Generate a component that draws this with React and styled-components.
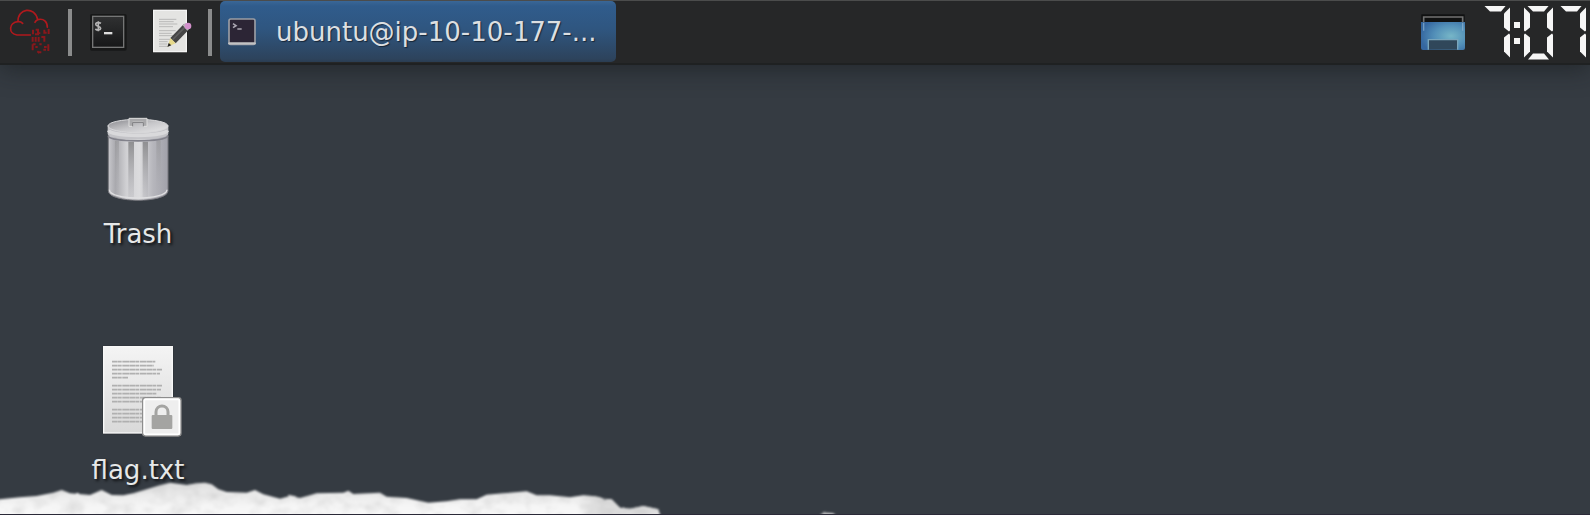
import React from "react";
import styled, { createGlobalStyle } from "styled-components";

const GlobalStyle = createGlobalStyle`
  body {
    margin: 0;
    background: #353b42;
    font-family: "DejaVu Sans", sans-serif;
  }
`;

const Desktop = styled.div`
  position: relative;
  box-sizing: border-box;
  min-height: 100vh;
  overflow: hidden;
  background: #353b42;
  border-bottom: 1px solid #2b2a38;
`;

const Panel = styled.header`
  display: flex;
  align-items: center;
  height: 65px;
  background: #262728;
  box-shadow: inset 0 1px #4b4c4c, inset 0 -2px #1f2122,
    0 4px 24px rgba(20, 24, 26, 0.55);
`;

const PanelButton = styled.button`
  display: flex;
  align-items: center;
  justify-content: center;
  width: 64px;
  height: 64px;
  padding: 0;
  border: 0;
  background: none;
`;

const Separator = styled.span`
  width: 4px;
  height: 47px;
  margin: 0 4px;
  background: #8b8c8c;
`;

const TaskButton = styled.button`
  display: flex;
  align-items: center;
  gap: 18px;
  width: 396px;
  height: 61px;
  margin: 0 auto 2px 4px;
  padding: 1px 6px 0;
  border: 0;
  border-radius: 5px;
  background: linear-gradient(#3a6797, #305c8c 8%, #2f5680 45%, #2d435c 95%, #2b3d51);
  color: #dcdfe1;
  font: 26px/30px "DejaVu Sans", sans-serif;
  text-shadow: 1px 1px 1px rgba(0, 0, 0, 0.5);
  white-space: nowrap;
`;

const Clock = styled.time`
  display: flex;
  align-items: center;
  gap: 4px;
  margin: 0 4px 0 6px;
`;

const DigitFace = styled.span`
  display: grid;
  grid-template-columns: 7px 15px 7px;
  grid-template-rows: 6px 20px 4px 20px 4px;
  width: 29px;
  height: 54px;
`;

const segmentStyles = {
  top: ["1 / 1 / 2 / 4", "polygon(3px 0, 25px 0, 20px 6px, 9px 6px)"],
  upperLeft: ["1 / 1 / 3 / 2", "polygon(0 2px, 6px 8px, 6px 22px, 1px 26px, 0 25px)"],
  upperRight: ["1 / 3 / 3 / 4", "polygon(7px 2px, 1px 8px, 1px 22px, 6px 26px, 7px 25px)"],
  lowerLeft: ["3 / 1 / 6 / 2", "polygon(0 3px, 1px 2px, 6px 6px, 6px 20px, 0 26px)"],
  lowerRight: ["3 / 3 / 6 / 4", "polygon(7px 3px, 6px 2px, 1px 6px, 1px 20px, 7px 26px)"],
  bottom: ["4 / 1 / 6 / 4", "polygon(9px 18px, 20px 18px, 25px 24px, 4px 24px)"],
};

const Segment = styled.i`
  grid-area: ${({ $side }) => segmentStyles[$side][0]};
  clip-path: ${({ $side }) => segmentStyles[$side][1]};
  background: #f6f6f6;
`;

const Colon = styled.span`
  display: flex;
  flex-direction: column;
  gap: 10px;
`;

const ColonDot = styled.i`
  width: 6px;
  height: 6px;
  background: #f6f6f6;
`;

const Icons = styled.main`
  display: flex;
  flex-direction: column;
  align-items: flex-start;
  gap: 94px;
  padding: 42px 38px 24px;
`;

const DesktopIcon = styled.button`
  display: flex;
  flex-direction: column;
  align-items: center;
  gap: 16px;
  width: 200px;
  padding: 0;
  border: 0;
  background: none;
  color: #e6e8e8;
  font: 26px/30px "DejaVu Sans", sans-serif;
  text-shadow: 2px 2px 3px rgba(0, 0, 0, 0.75);
`;

const TornEdge = styled.svg`
  position: absolute;
  left: 0;
  bottom: -1px;
  display: block;
  pointer-events: none;
`;

const LIT = {
  0: ["top", "upperLeft", "upperRight", "lowerLeft", "lowerRight", "bottom"],
  7: ["top", "upperRight", "lowerRight"],
};

function Digit({ value }) {
  return (
    <DigitFace>
      {LIT[value].map((side) => (
        <Segment key={side} $side={side} />
      ))}
    </DigitFace>
  );
}

function CloudIcon() {
  return (
    <svg width="48" height="48" viewBox="24 24 144 144" fill="none" stroke="#b0191d">
      <path
        strokeWidth="5"
        strokeLinecap="round"
        d="M91 102H51C24 98 26 64 54 62C52 22 104 14 113 56C132 51 142 63 142 79M54 62C61 61 65 64 68 67M113 56C108 58 106 61 105 64"
      />
      <g strokeWidth="6" stroke="#8a171b">
        <path d="M99 86v14M107 86h7v14h-9M118 99v-5M133 86v9h7M146 84v15" />
        <path d="M98 108v14M107 108v14M116 108v14M124 108h9v14" />
        <path d="M98 130h9M98 130v18M106 138h7M118 130h7M132 138h8M145 130v20M138 146h-8" />
        <path d="M112 151l6 5M124 154h-8" />
      </g>
    </svg>
  );
}

function TerminalIcon() {
  return (
    <svg width="48" height="48" viewBox="252 24 144 144">
      <defs>
        <linearGradient id="termFace" x2="0" y2="1">
          <stop stopColor="#303132" />
          <stop offset="1" stopColor="#161718" />
        </linearGradient>
      </defs>
      <rect x="270" y="39" width="110" height="110" rx="5" fill="#171818" />
      <rect x="278" y="46" width="93" height="93" fill="url(#termFace)" stroke="#757676" strokeWidth="4" />
      <path
        d="M303 67C293 62 285 66 288 72C291 76 302 76 302 82C302 88 292 89 286 84M295 61V91"
        fill="none" stroke="#b4b4b4" strokeWidth="5"
      />
      <rect x="312" y="93" width="25" height="7" fill="#dedede" />
    </svg>
  );
}

function EditorIcon() {
  return (
    <svg width="48" height="48" viewBox="444 24 144 144">
      <rect x="458" y="26" width="104" height="130" fill="#151616" />
      <rect x="461" y="28" width="98" height="124" fill="#e4e4e2" stroke="#f4f4f4" strokeWidth="4" />
      <path
        stroke="#b9b9b8" strokeWidth="3"
        d="M477 55h52M477 62h44M477 69h55M477 77h42M477 89h50M477 97h38M477 104h47M477 115h37M477 122h26M477 129h25M477 136h24"
      />
      <path d="M511 111L551 70L566 86L527 127Z" fill="#454545" />
      <path d="M517 117L557 76" stroke="#5d5d5d" strokeWidth="5" />
      <path d="M511 111L527 127L503 137Z" fill="#e6d98a" />
      <path d="M506 126L514 133L502 138Z" fill="#252525" />
      <path d="M548 73L556 66L571 80L562 89Z" fill="#b9b9b9" />
      <circle cx="564" cy="75" r="10" fill="#d391cb" />
    </svg>
  );
}

function TaskIcon() {
  return (
    <svg width="32" height="32" viewBox="78 45 96 96">
      <rect x="87" y="54" width="78" height="76" rx="5" fill="#2c2535" stroke="#9b9da4" strokeWidth="5" />
      <path d="M88 127H164" stroke="#c2c2c3" strokeWidth="7" strokeLinecap="round" />
      <path d="M99 68L108 74L99 80M112 84H125" fill="none" stroke="#aaa6b1" strokeWidth="5" />
    </svg>
  );
}

function ShowDesktopIcon() {
  return (
    <svg width="48" height="48" viewBox="84 24 144 144">
      <defs>
        <radialGradient id="deskGlow" cx="0.68" cy="0.5" r="0.7">
          <stop stopColor="#77b6c7" />
          <stop offset="0.55" stopColor="#528fb8" />
          <stop offset="1" stopColor="#3567a0" />
        </radialGradient>
      </defs>
      <rect x="91" y="40" width="130" height="26" fill="#101111" />
      <path d="M90 63H222V141Q222 147 216 147H96Q90 147 90 141Z" fill="url(#deskGlow)" />
      <path d="M98 64V48H215V64" fill="none" stroke="#717272" strokeWidth="5" />
      <path d="M98 66V89M215 66V89" stroke="#8bb2d0" strokeWidth="4" opacity="0.7" />
      <path d="M112 146V116H200V146" fill="#30475a" stroke="#7aa6bc" strokeWidth="4" />
    </svg>
  );
}

function TrashIcon() {
  return (
    <svg width="96" height="96" viewBox="30 21 288 288">
      <defs>
        <linearGradient id="canBody">
          <stop stopColor="#c8c8cc" />
          <stop offset="0.12" stopColor="#a9a9ae" />
          <stop offset="0.3" stopColor="#d0d0d3" />
          <stop offset="0.52" stopColor="#dcdcde" />
          <stop offset="0.75" stopColor="#b6b6bc" />
          <stop offset="1" stopColor="#a1a1aa" />
        </linearGradient>
        <linearGradient id="canLid" x2="1" y2="1">
          <stop stopColor="#88888d" />
          <stop offset="0.5" stopColor="#c6c6c9" />
          <stop offset="1" stopColor="#e8e8e9" />
        </linearGradient>
        <linearGradient id="canGroove" x2="0" y2="1">
          <stop stopColor="#8f8f91" />
          <stop offset="1" stopColor="#b1b1b6" stopOpacity="0.3" />
        </linearGradient>
      </defs>
      <path d="M85 105V273C87 310 262 310 264 273V105Z" fill="url(#canBody)" stroke="#77777d" strokeWidth="3" />
      <path d="M88 269C90 302 259 302 261 269" fill="none" stroke="#dfdfe1" strokeWidth="4" />
      <path d="M145 125h17v166h-17zM188 125h16v166h-16z" fill="url(#canGroove)" />
      <path d="M105 122h12v160h-12zM229 120h13v160h-13z" fill="url(#canGroove)" opacity="0.5" />
      <path d="M84 109C98 127 249 127 264 109" fill="none" stroke="#82828b" strokeWidth="5" />
      <path d="M83 76V102C88 124 260 124 265 102V76Z" fill="#c3c3c7" />
      <path d="M86 91C94 111 254 111 262 91" fill="none" stroke="#d9d9db" strokeWidth="11" />
      <ellipse cx="174" cy="78" rx="90" ry="20" fill="url(#canLid)" stroke="#d8d8da" strokeWidth="3" />
      <path d="M147 79V55H201V79H190V66H158V79Z" fill="#a9a9ab" stroke="#dedede" strokeWidth="3" />
      <path d="M158 79V67H190V79" fill="none" stroke="#78787b" strokeWidth="3" />
    </svg>
  );
}

const paragraphLines = [
  [95, 130], [107, 125], [119, 150], [131, 144], [143, 48],
  [167, 150], [179, 147], [191, 133], [203, 146], [215, 120],
  [239, 130], [251, 130], [263, 130], [275, 130],
];

function LockedTextIcon() {
  return (
    <svg width="96" height="96" viewBox="30 39 288 288">
      <defs>
        <linearGradient id="sheet" x2="0" y2="1">
          <stop stopColor="#f4f4f4" />
          <stop offset="1" stopColor="#d9d9d9" />
        </linearGradient>
      </defs>
      <rect x="68" y="47" width="212" height="266" rx="3" fill="#22272b" opacity="0.7" />
      <rect x="71" y="50" width="206" height="259" fill="url(#sheet)" stroke="#f8f8f8" strokeWidth="4" />
      <g stroke="#b0b0b0" strokeWidth="5" strokeDasharray="17 1 11 2 20 1">
        {paragraphLines.map(([y, length]) => (
          <path key={y} d={`M96 ${y}h${length}`} />
        ))}
      </g>
      <rect x="188" y="203" width="115" height="115" rx="8" fill="#f1f1f1" stroke="#8d8d8d" strokeWidth="4" />
      <rect x="193" y="208" width="105" height="105" rx="4" fill="#eeeeee" stroke="#ffffff" strokeWidth="5" />
      <path d="M228 257V246C228 222 264 222 264 246V257" fill="none" stroke="#a4a4a2" strokeWidth="9" />
      <rect x="215" y="255" width="62" height="42" rx="3" fill="#a4a4a2" />
    </svg>
  );
}

function TornPaper() {
  return (
    <TornEdge width="900" height="45" viewBox="0 0 2700 135" aria-hidden="true">
      <defs>
        <filter id="paper" x="-2%" y="-20%" width="104%" height="140%">
          <feTurbulence type="fractalNoise" baseFrequency="0.02 0.03" numOctaves="3" seed="4" result="noise" />
          <feColorMatrix
            in="noise"
            values="0 0 0 0 0.5  0 0 0 0 0.5  0 0 0 0 0.5  0.9 0 0 0 -0.37"
            result="fibres"
          />
          <feComposite in="fibres" in2="SourceGraphic" operator="in" result="grain" />
          <feMerge result="textured">
            <feMergeNode in="SourceGraphic" />
            <feMergeNode in="grain" />
          </feMerge>
          <feDisplacementMap in="textured" in2="noise" scale="6" />
          <feGaussianBlur stdDeviation="3" />
        </filter>
        <linearGradient id="paperShade" x2="0" y2="1">
          <stop stopColor="#dedede" />
          <stop offset="0.5" stopColor="#f4f4f4" />
          <stop offset="1" stopColor="#ffffff" />
        </linearGradient>
        <linearGradient id="paperEnd">
          <stop stopColor="#c9c9c9" stopOpacity="0" />
          <stop offset="0.3" stopColor="#cecece" stopOpacity="0.7" />
          <stop offset="1" stopColor="#dedede" stopOpacity="0.8" />
        </linearGradient>
      </defs>
      <g filter="url(#paper)">
        <path
          fill="url(#paperShade)"
          d="M-30 170V90L0 88L60 82L110 78L160 68L185 60L210 70L270 75L305 60L335 75L370 76L400 70L440 58L480 46L510 38L560 45L590 40L615 38L635 43L655 58L680 66L740 68L765 60L790 73L840 86L870 78L900 84L930 76L950 70L1030 68L1045 62L1060 72L1140 68L1160 80L1220 84L1285 98L1340 94L1380 88L1430 88L1460 74L1510 70L1580 64L1610 76L1650 76L1710 82L1750 76L1785 79L1800 82L1810 86L1835 88L1860 113L1890 116L1930 108L1975 118L1990 170Z"
        />
        <path
          fill="url(#paperEnd)"
          d="M1730 170V79L1785 79L1810 86L1835 88L1860 113L1890 116L1930 108L1975 118L1990 170Z"
        />
        <path fill="#dddddd" d="M2455 145L2464 132L2480 128L2500 130L2515 145Z" />
      </g>
    </TornEdge>
  );
}

export default function App() {
  return (
    <>
      <GlobalStyle />
      <Desktop>
        <Panel>
          <PanelButton aria-label="Applications menu"><CloudIcon /></PanelButton>
          <Separator />
          <PanelButton aria-label="Terminal"><TerminalIcon /></PanelButton>
          <PanelButton aria-label="Text editor"><EditorIcon /></PanelButton>
          <Separator />
          <TaskButton>
            <TaskIcon />
            ubuntu@ip-10-10-177-...
          </TaskButton>
          <PanelButton aria-label="Show desktop"><ShowDesktopIcon /></PanelButton>
          <Clock aria-label="7:07">
            <Digit value={7} />
            <Colon>
              <ColonDot />
              <ColonDot />
            </Colon>
            <Digit value={0} />
            <Digit value={7} />
          </Clock>
        </Panel>
        <Icons>
          <DesktopIcon>
            <TrashIcon />
            Trash
          </DesktopIcon>
          <DesktopIcon>
            <LockedTextIcon />
            flag.txt
          </DesktopIcon>
        </Icons>
        <TornPaper />
      </Desktop>
    </>
  );
}
